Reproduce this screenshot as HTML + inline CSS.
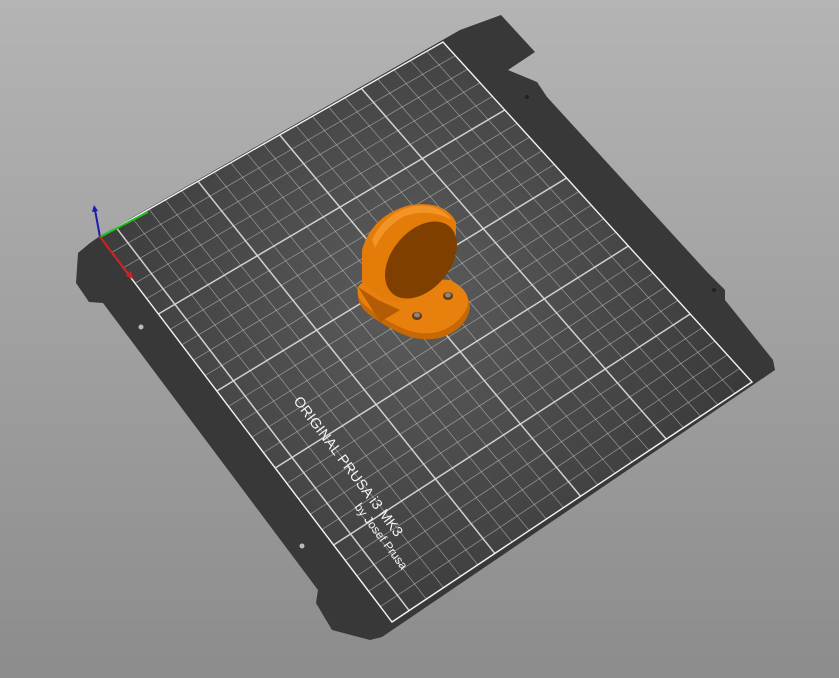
<!DOCTYPE html>
<html><head><meta charset="utf-8"><style>
html,body{margin:0;padding:0;width:839px;height:678px;overflow:hidden}
body{background:linear-gradient(#b4b4b4,#8c8c8c)}
svg{position:absolute;left:0;top:0}
</style></head><body>
<svg id="s" width="839" height="678" viewBox="0 0 839 678">
<defs>
<radialGradient id="g" cx="410" cy="300" r="340" gradientUnits="userSpaceOnUse">
<stop offset="0" stop-color="#5c5c5c"/><stop offset="1" stop-color="#3a3a3a"/></radialGradient>
</defs>
<polygon fill="#383838" points="78,253 90,243 100,236 460,30 501,15 535,52 508,70 537,82 547,97 708,273 725,290 725,300 773,360 775,370 382,637 370,640 332,630 316,603 318,590 103,303 89,302 76,283"/>
<polygon fill="url(#g)" points="100,237 443,42 752,382 392,622"/>
<g id="grid" stroke="#d8d8d8" fill="none"></g>
<polygon fill="none" stroke="#f4f4f4" stroke-width="1.4" points="100,237 443,42 752,382 392,622"/>
<circle cx="141" cy="327" r="2.5" fill="#bbb"/><circle cx="302" cy="546" r="2.5" fill="#bbb"/>
<circle cx="714" cy="290" r="2" fill="#222"/><circle cx="527" cy="97" r="2" fill="#222"/>
<text x="0" y="0" transform="translate(293,401) rotate(53)" fill="#f2f2f2" font-family="Liberation Sans" font-size="14.5">ORIGINAL PRUSA i3  MK3</text>
<text x="0" y="0" transform="translate(354,507) rotate(53)" fill="#f2f2f2" font-family="Liberation Sans" font-size="12">by Josef Prusa</text>
<line x1="100" y1="237" x2="95" y2="210" stroke="#1a1ab0" stroke-width="2"/>
<polygon points="92,212 94,205 98,211" fill="#1a1ab0"/>
<line x1="100" y1="237" x2="148" y2="212" stroke="#20c020" stroke-width="2"/>
<line x1="100" y1="237" x2="130" y2="276" stroke="#d02020" stroke-width="2"/>
<polygon points="126,276 133,279 131,271" fill="#d02020"/>
<!-- object base -->
<path d="M358,290 Q362,282 380,278 L450,282 Q470,292 470,308 Q466,330 440,338 Q420,342 402,334 Q380,324 366,312 Q356,302 358,290Z" fill="#c66806"/>
<path d="M358,287 Q362,280 380,276 L450,280 Q470,290 468,304 Q462,324 438,332 Q420,336 402,328 Q380,318 366,306 Q356,298 358,287Z" fill="#e8800e"/>
<path d="M358,287 L378,300 L400,310 L380,322 Z" fill="#b35c05"/>
<!-- cylinder -->
<path d="M362,250 Q372,215 410,205 Q445,200 456,222 L456,240 Q452,275 420,295 Q398,306 382,298 L362,282 Z" fill="#e47c0a"/>
<path d="M372,240 Q385,212 415,206 Q440,204 452,220 Q430,208 405,216 Q385,226 375,248Z" fill="#f39526"/>
<ellipse cx="421" cy="260" rx="29" ry="44" transform="rotate(40 421 260)" fill="#7e3f00"/>
<ellipse cx="417" cy="316" rx="5" ry="4" fill="#6a3a10"/><ellipse cx="417" cy="315" rx="3" ry="2.5" fill="#888"/>
<ellipse cx="448" cy="296" rx="5" ry="4" fill="#6a3a10"/><ellipse cx="448" cy="295" rx="3" ry="2.5" fill="#888"/>
</svg>
<script>
var P=[[100,237],[443,42],[752,382],[392,622]];
function m(u,v){var a=P[0],b=P[1],c=P[2],d=P[3];
return [(1-u)*(1-v)*a[0]+u*(1-v)*b[0]+u*v*c[0]+(1-u)*v*d[0],(1-u)*(1-v)*a[1]+u*(1-v)*b[1]+u*v*c[1]+(1-u)*v*d[1]];}
var g=document.getElementById('grid'),h='';
function L(p,q,maj){h+='<line x1="'+p[0]+'" y1="'+p[1]+'" x2="'+q[0]+'" y2="'+q[1]+'" stroke-width="'+(maj?1.5:0.7)+'" stroke-opacity="'+(maj?0.95:0.55)+'"/>';}
for(var mm=10;mm<210;mm+=10){var u=mm/210;L(m(u,0),m(u,1),mm%50==10);}
for(var mm=10;mm<250;mm+=10){var v=mm/250;L(m(0,v),m(1,v),mm%50==0);}
g.innerHTML=h;
</script>
</body></html>
